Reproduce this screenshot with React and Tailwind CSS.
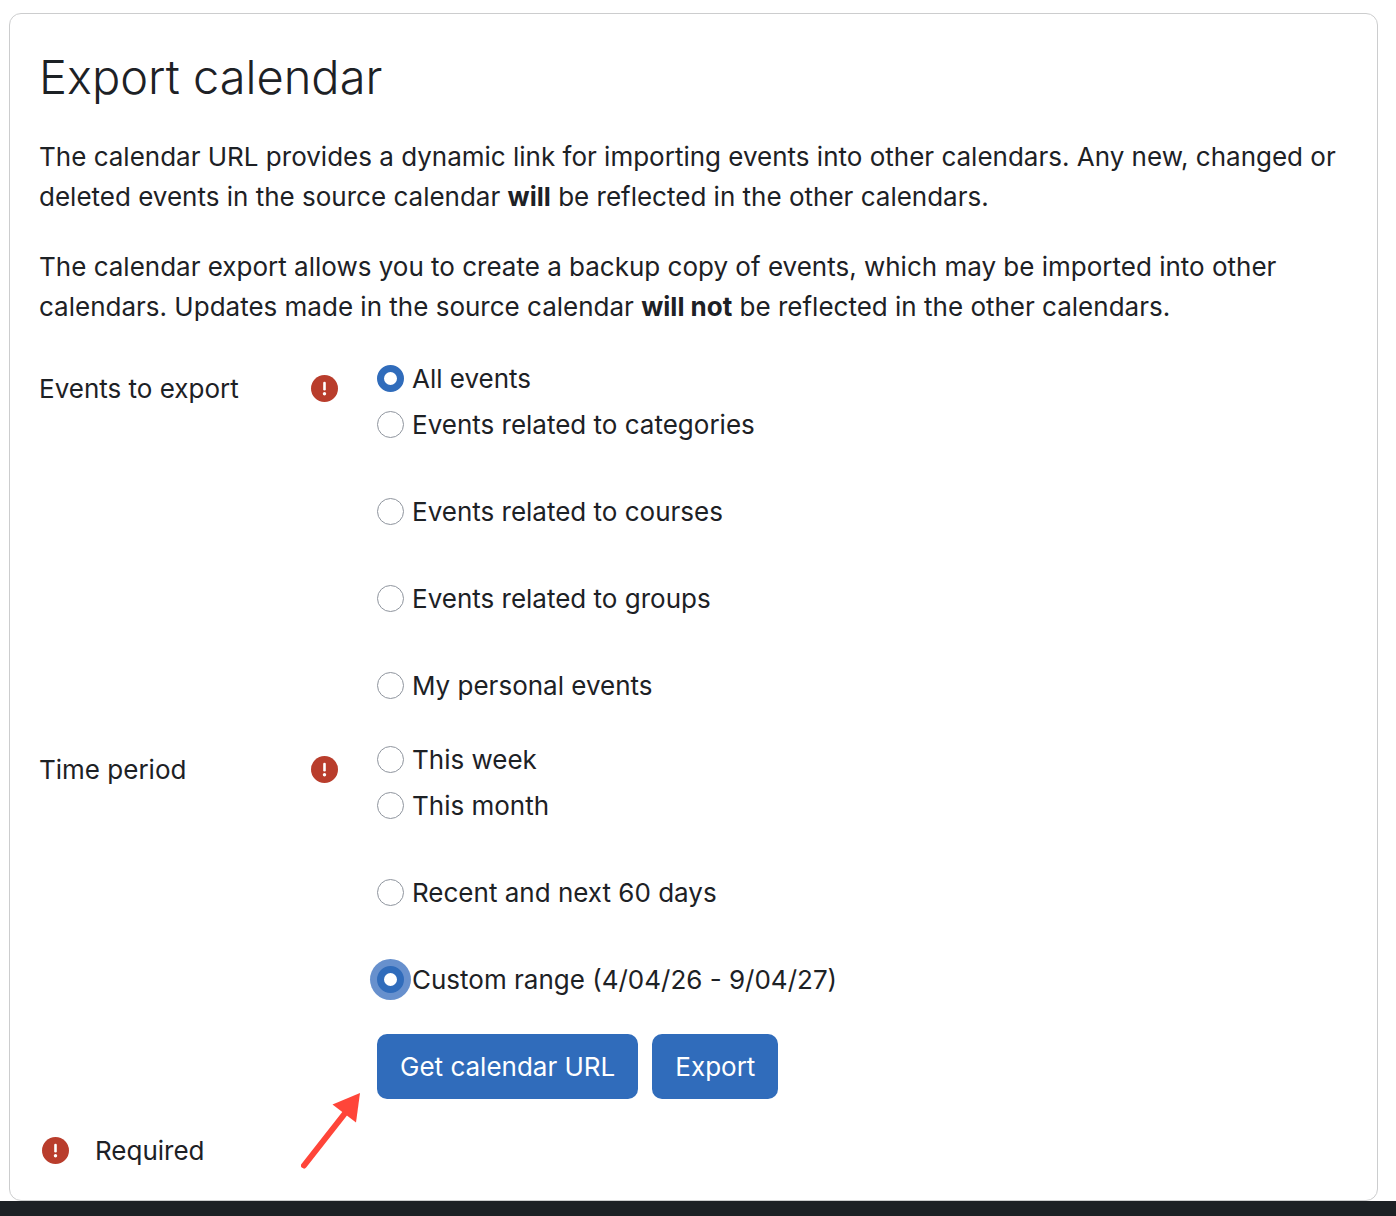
import { useState } from 'react';

const eventOptions = [
  { id: 'all', label: 'All events' },
  { id: 'categories', label: 'Events related to categories' },
  { id: 'courses', label: 'Events related to courses' },
  { id: 'groups', label: 'Events related to groups' },
  { id: 'user', label: 'My personal events' },
];

const periodOptions = [
  { id: 'weeknow', label: 'This week' },
  { id: 'monthnow', label: 'This month' },
  { id: 'recentupcoming', label: 'Recent and next 60 days' },
  { id: 'custom', label: 'Custom range (4/04/26 - 9/04/27)' },
];

const RequiredIcon = () => (
  <svg viewBox="0 0 27 27" className="w-[27px] h-[27px] mb-[2px] shrink-0" role="img" aria-label="Required">
    <circle cx="13.5" cy="13.5" r="13.5" fill="#b93d2c" />
    <path d="M13.5 8v6.2" stroke="#fff" strokeWidth="2.6" strokeLinecap="round" />
    <circle cx="13.5" cy="18.8" r="1.7" fill="#fff" />
  </svg>
);

const RadioGroup = ({ name, title, options, value, onChange, focused }) => (
  <fieldset className="flex" aria-label={title}>
    <div className="w-[338px] shrink-0 pt-[10px]">
      <div className="flex items-center justify-between h-10 w-[299px]">
        <span>{title}</span>
        <RequiredIcon />
      </div>
    </div>
    <div className="flex-1 min-w-0">
      {options.map((option, index) => (
        <label
          key={option.id}
          className={`flex items-center gap-2 w-fit h-10 ${
            index === 0 ? '' : index === 1 ? 'mt-[6px]' : 'mt-[47px]'
          }`}
        >
          <input
            type="radio"
            name={name}
            value={option.id}
            checked={value === option.id}
            onChange={() => onChange(option.id)}
            className={`appearance-none w-[27px] h-[27px] mb-[2px] shrink-0 rounded-full border border-[#8f959e] bg-white checked:border-[7px] checked:border-[#306cbb] ${
              focused === option.id ? 'ring-[7px] ring-[#6790cd]' : ''
            }`}
          />
          <span>{option.label}</span>
        </label>
      ))}
    </div>
  </fieldset>
);

const ExportCalendar = () => {
  const [events, setEvents] = useState('all');
  const [period, setPeriod] = useState('custom');

  return (
    <form
      onSubmit={(e) => e.preventDefault()}
      className="ml-[9px] mr-[18px] mt-[13px] px-[29px] pt-8 pb-[29px] border border-[#cccdce] rounded-xl"
    >
      <h1 className="text-[47px] leading-[62px] font-[350]">Export calendar</h1>

      <p className="mt-[29px]">
        The calendar URL provides a dynamic link for importing events into other calendars. Any new, changed or
        deleted events in the source calendar <strong>will</strong> be reflected in the other calendars.
      </p>
      <p className="mt-[30px]">
        The calendar export allows you to create a backup copy of events, which may be imported into other
        calendars. Updates made in the source calendar <strong>will not</strong> be reflected in the other calendars.
      </p>

      <div className="mt-8">
        <RadioGroup
          name="exportevents"
          title="Events to export"
          options={eventOptions}
          value={events}
          onChange={setEvents}
        />
      </div>
      <div className="mt-[34px]">
        <RadioGroup
          name="period"
          title="Time period"
          options={periodOptions}
          value={period}
          onChange={setPeriod}
          focused="custom"
        />
      </div>

      {/* Actions */}
      <div className="relative mt-[34px] ml-[338px] flex gap-[14px]">
        <button type="submit" className="h-[65px] px-[23px] rounded-[10px] bg-[#306cbb] text-white">
          Get calendar URL
        </button>
        <button type="submit" className="h-[65px] px-[23px] rounded-[10px] bg-[#306cbb] text-white">
          Export
        </button>
        <svg viewBox="0 0 60 76" className="absolute top-[59px] -left-[76px] w-[60px] h-[76px]" aria-hidden="true">
          <path d="M3 72.5L45 19" stroke="#ff4539" strokeWidth="6" strokeLinecap="round" />
          <path d="M59 0L31.5 11.5L55 29.5Z" fill="#ff4539" />
        </svg>
      </div>

      <div className="mt-8 ml-[3px] flex items-center gap-[26px] h-10">
        <RequiredIcon />
        <span>Required</span>
      </div>
    </form>
  );
};

export default function App() {
  return (
    <div className="min-h-screen flex flex-col bg-white text-[#1d2125] font-['Inter',sans-serif] text-[26px] leading-10">
      <main>
        <ExportCalendar />
      </main>
      <footer className="grow bg-[#1d2125]" />
    </div>
  );
}
